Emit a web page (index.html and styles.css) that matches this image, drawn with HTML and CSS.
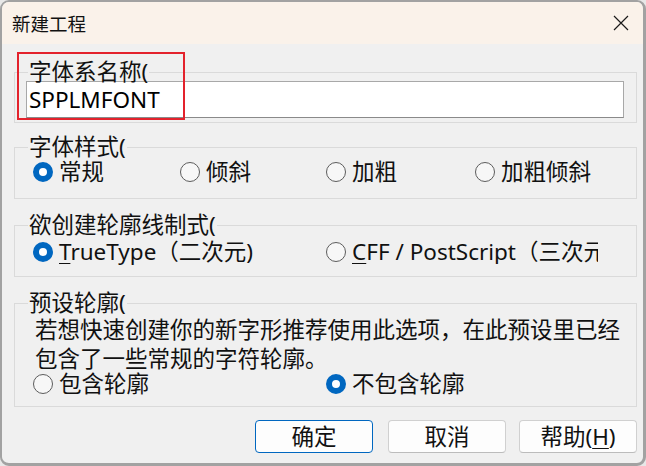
FILE: index.html
```html
<!DOCTYPE html>
<html lang="zh-CN">
<head>
<meta charset="utf-8">
<title>新建工程</title>
<link rel="stylesheet" href="styles.css">
</head>
<body>
<div class="window">
  <div class="titlebar">
    <span class="title">新建工程</span>
    <span class="close">
      <svg width="16" height="16" viewBox="0 0 16 16"><path d="M1 1 L15 15 M15 1 L1 15" stroke="#1a1a1a" stroke-width="1.2" fill="none"/></svg>
    </span>
  </div>
  <div class="content">
    <fieldset class="group g1">
      <legend>字体系名称(</legend>
      <div class="input">SPPLMFONT</div>
    </fieldset>
    <fieldset class="group g2">
      <legend>字体样式(</legend>
      <div class="inner">
        <div class="row cols4">
          <label class="radio"><span class="dot on"></span><span>常规</span></label>
          <label class="radio"><span class="dot"></span><span>倾斜</span></label>
          <label class="radio"><span class="dot"></span><span>加粗</span></label>
          <label class="radio"><span class="dot"></span><span>加粗倾斜</span></label>
        </div>
      </div>
    </fieldset>
    <fieldset class="group g3">
      <legend>欲创建轮廓线制式(</legend>
      <div class="inner">
        <div class="row cols2">
          <label class="radio"><span class="dot on"></span><span><u>T</u>rueType（二次元)</span></label>
          <label class="radio clip"><span class="dot"></span><span class="cliptext"><u>C</u>FF / PostScript（三次元)</span></label>
        </div>
      </div>
    </fieldset>
    <fieldset class="group g4">
      <legend>预设轮廓(</legend>
      <div class="inner">
        <p class="desc">若想快速创建你的新字形推荐使用此选项，在此预设里已经<br>包含了一些常规的字符轮廓。</p>
        <div class="row cols2 last">
          <label class="radio"><span class="dot"></span><span>包含轮廓</span></label>
          <label class="radio"><span class="dot on"></span><span>不包含轮廓</span></label>
        </div>
      </div>
    </fieldset>
    <div class="buttons">
      <button class="btn default">确定</button>
      <button class="btn">取消</button>
      <button class="btn">帮助(<u>H</u>)</button>
    </div>
  </div>
  <div class="highlight"></div>
</div>
</body>
</html>
```
FILE: styles.css
```css
* { box-sizing: border-box; }
html, body { margin: 0; padding: 0; }
body {
  width: 646px;
  height: 466px;
  background: #e8e8e8;
  font-family: "Noto Sans", "Noto Sans CJK SC", sans-serif;
  color: #111;
  overflow: hidden;
}
.window {
  position: relative;
  width: 646px;
  height: 466px;
  background: #f0f0f0;
  border: 2px solid #a2a2a2;
  border-right-width: 3px;
  border-bottom-width: 3px;
  border-radius: 9px;
  overflow: hidden;
}
.titlebar {
  height: 42px;
  background: #faf2ea;
  display: flex;
  align-items: center;
  justify-content: space-between;
  padding: 0 14px 0 10px;
}
.title {
  font-family: "Noto Sans CJK SC", sans-serif;
  font-size: 18.5px;
  line-height: 22px;
  color: #111;
}
.close { display: flex; width: 16px; height: 16px; }
.content {
  padding: 18px 6px 0 12px;
  display: flex;
  flex-direction: column;
}
.group {
  margin: 0;
  padding: 0;
  min-width: 0;
  border: 1px solid #dadada;
  font-size: 22.5px;
}
.group legend {
  margin-left: 13px;
  padding: 0 1px;
  line-height: 20px;
  font-size: 22.5px;
}
.g2 { margin-top: 14px; }
.g3, .g4 { margin-top: 16px; }
.g1 { padding-bottom: 4px; }
.inner { padding-left: 18px; }
.g2 .inner { padding-top: 3px; padding-bottom: 14px; }
.g3 .inner { padding-top: 5px; padding-bottom: 12px; }
.g4 .inner { padding-top: 2px; padding-bottom: 11px; }
.input {
  margin: -1px 12px 0 11px;
  height: 37px;
  background: #fff;
  border: 1px solid #a8a8a8;
  border-bottom-color: #8a8a8a;
  padding-left: 2px;
  line-height: 35px;
  font-size: 22.5px;
  color: #000;
}
.row { display: grid; line-height: 24px; }
.row.last { line-height: 22px; }
.cols4 { grid-template-columns: 147px 146px 149px 1fr; }
.cols2 { grid-template-columns: 293px 272px; }
.radio {
  display: flex;
  align-items: center;
  gap: 6px;
  white-space: nowrap;
  min-width: 0;
}
.clip { overflow: hidden; }
.cliptext { overflow: hidden; }
.dot {
  flex: none;
  width: 20px;
  height: 20px;
  border-radius: 50%;
  border: 1px solid #5c5c5c;
  background: #f7f7f7;
}
.dot.on {
  border: 6px solid #0067c0;
  background: #fff;
}
.desc {
  margin: 0;
  padding-left: 2px;
  line-height: 29px;
  font-size: 22.5px;
}
u { text-decoration-thickness: 1px; text-underline-offset: 3px; }
.buttons {
  margin-top: 13px;
  display: flex;
  justify-content: flex-end;
  gap: 13px;
}
.btn {
  width: 118px;
  height: 33px;
  margin: 0;
  padding: 0;
  border: 1px solid #d0d0d0;
  border-bottom-color: #bcbcbc;
  border-radius: 4px;
  background: #fdfdfd;
  font-family: "Noto Sans", "Noto Sans CJK SC", sans-serif;
  font-size: 22.5px;
  line-height: 31px;
  color: #111;
}
.btn.default { border: 1px solid #0067c0; margin-right: 2px; }
.highlight {
  position: absolute;
  left: 15px;
  top: 50px;
  width: 168px;
  height: 68px;
  border: 2px solid #e3222c;
}
```
